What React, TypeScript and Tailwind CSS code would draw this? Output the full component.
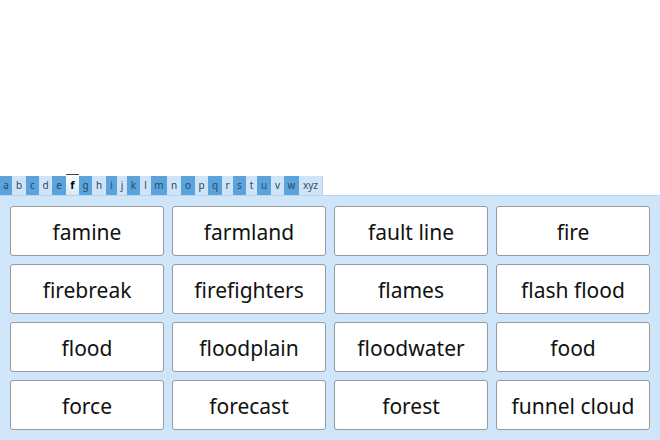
import React from "react";

const tabs: { l: string; w: number; dark: boolean }[] = [
  { l: "a", w: 12, dark: true },
  { l: "b", w: 14, dark: false },
  { l: "c", w: 13, dark: true },
  { l: "d", w: 13, dark: false },
  { l: "e", w: 14, dark: true },
  { l: "f", w: 13, dark: false },
  { l: "g", w: 13, dark: true },
  { l: "h", w: 14, dark: false },
  { l: "i", w: 11, dark: true },
  { l: "j", w: 10, dark: false },
  { l: "k", w: 13, dark: true },
  { l: "l", w: 11, dark: false },
  { l: "m", w: 16, dark: true },
  { l: "n", w: 14, dark: false },
  { l: "o", w: 14, dark: true },
  { l: "p", w: 13, dark: false },
  { l: "q", w: 14, dark: true },
  { l: "r", w: 11, dark: false },
  { l: "s", w: 13, dark: true },
  { l: "t", w: 11, dark: false },
  { l: "u", w: 14, dark: true },
  { l: "v", w: 13, dark: false },
  { l: "w", w: 15, dark: true },
  { l: "xyz", w: 23, dark: false },
];

const words = [
  "famine", "farmland", "fault line", "fire",
  "firebreak", "firefighters", "flames", "flash flood",
  "flood", "floodplain", "floodwater", "food",
  "force", "forecast", "forest", "funnel cloud",
];

export default function App() {
  return (
    <div className="h-[440px] w-[660px] flex flex-col bg-white overflow-hidden" style={{ fontFamily: '"Noto Sans", sans-serif' }}>
      <div className="h-[176px] shrink-0" />
      <div className="h-[19px] shrink-0 flex items-end">
        <div className="flex h-[19px] border-r border-[#b9cbe0]">
          {tabs.map((t) =>
            t.l === "f" ? (
              <div
                key={t.l}
                style={{ width: t.w }}
                className="h-[21px] -mt-[2px] relative z-10 flex items-center justify-center border-t border-[#444] bg-gradient-to-b from-white to-[#d6e8f9] text-[11px] font-bold text-black"
              >
                {t.l}
              </div>
            ) : (
              <div
                key={t.l}
                style={{ width: t.w }}
                className={
                  "h-[19px] flex items-center justify-center text-[10px] text-[#33475b] " +
                  (t.dark ? "bg-[#5ba3dc]" : "bg-[#cfe4f8]")
                }
              >
                {t.l}
              </div>
            )
          )}
        </div>
      </div>
      <div className="flex-1 bg-[#cfe5fa] border-t border-[#b9d3ec] pl-[10px] pr-[10px] pt-[10px]">
        <div className="grid grid-cols-[154px_154px_154px_154px] gap-x-[8px] gap-y-[8px]">
          {words.map((w) => (
            <div
              key={w}
              className="h-[50px] pt-[3px] bg-white border border-[#9a9a9a] rounded-[3px] flex items-center justify-center text-[21px] text-[#111]"
              style={{ fontFamily: '"Noto Sans", sans-serif' }}
            >
              {w}
            </div>
          ))}
        </div>
      </div>
    </div>
  );
}
